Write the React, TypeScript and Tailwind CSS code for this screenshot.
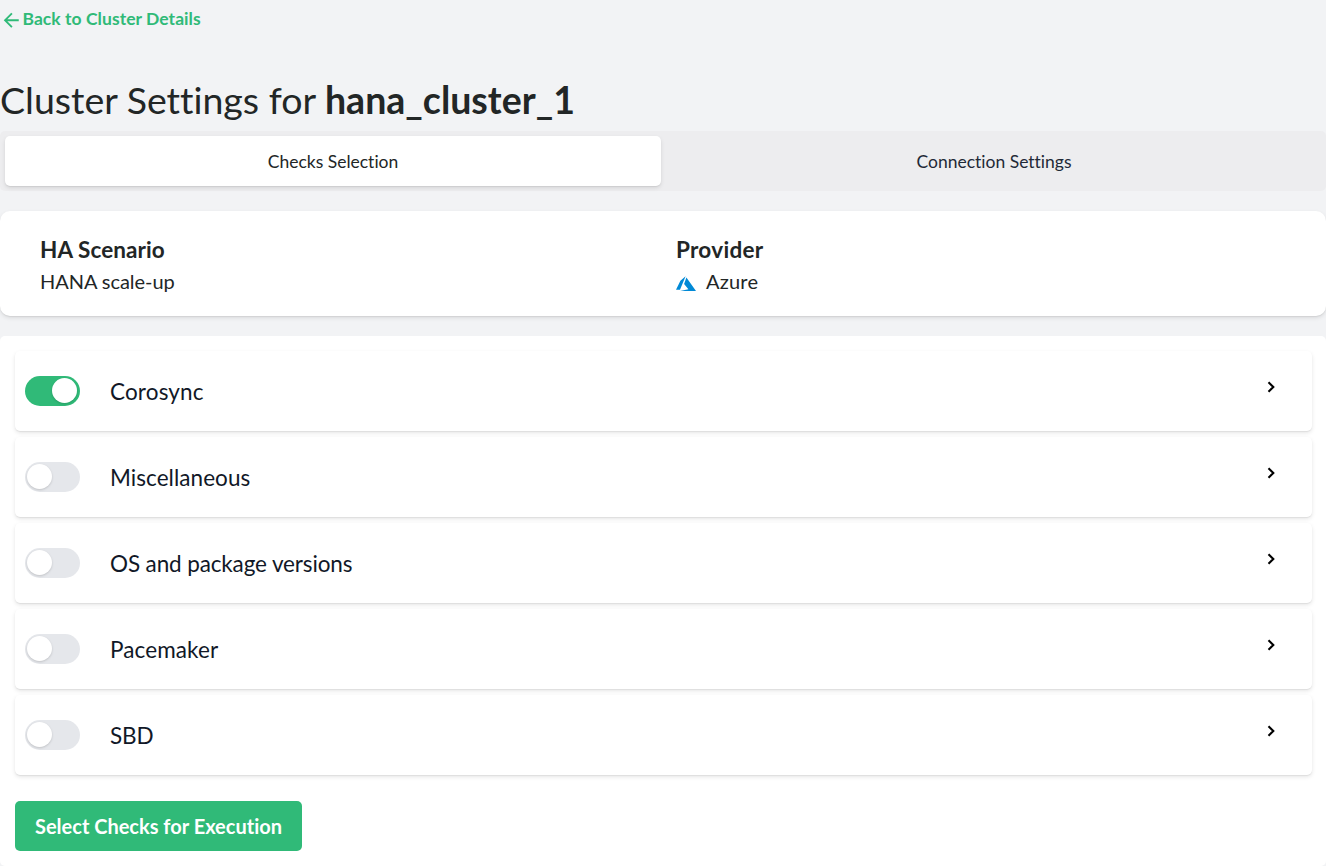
const groups = [
  { name: 'Corosync', on: true, spacing: 'tracking-[0.15px]' },
  { name: 'Miscellaneous', on: false, spacing: 'tracking-[0.06px]' },
  { name: 'OS and package versions', on: false, spacing: 'tracking-[-0.13px]' },
  { name: 'Pacemaker', on: false, spacing: 'tracking-[0.1px]' },
  { name: 'SBD', on: false, spacing: 'tracking-[-0.1px]' },
];

const softShadow = 'shadow-[0_1px_3px_0_rgba(0,0,0,0.1),0_1px_2px_0_rgba(0,0,0,0.06)]';
const cardShadow = 'shadow-[0_2px_4px_0_rgba(0,0,0,0.1),0_1px_1px_0_rgba(0,0,0,0.06)]';

function Toggle({ on }: { on: boolean }) {
  return (
    <button
      role="switch"
      aria-checked={on}
      className={`flex h-[30px] w-[55px] shrink-0 items-start rounded-full px-[2px] pt-[2px] ${on ? 'bg-[#30ba78]' : 'bg-[#e5e7eb]'}`}
    >
      <span className={`size-[25px] rounded-full bg-white ${softShadow} ${on ? 'ml-[25px]' : 'ml-0'}`} />
    </button>
  );
}

function ArrowBack() {
  return (
    <svg viewBox="0 0 24 24" className="mt-[2px] size-[22.5px] shrink-0 fill-current">
      <path d="M20 11H7.83l5.59-5.59L12 4l-8 8 8 8 1.41-1.41L7.83 13H20v-2z" />
    </svg>
  );
}

function AzureLogo() {
  return (
    <svg viewBox="0 0 20 16" className="h-[16px] w-[20px] shrink-0">
      <path fill="#0089d6" d="M9.6.2 4.4 4.8 0 13.8h4zM10.4 1.4 8.1 8l4.3 5.3-8.3 1.8H20z" />
    </svg>
  );
}

function Chevron() {
  return (
    <svg viewBox="0 0 24 24" className="size-[20px] shrink-0 fill-none stroke-black stroke-[2.5]">
      <path d="M9 6.2 14.8 12 9 17.8" />
    </svg>
  );
}

export default function App() {
  return (
    <div className="h-[866px] overflow-hidden bg-[#f2f3f5] font-['Lato',sans-serif] text-[20px] leading-[30px] text-[#222626] [font-variant-ligatures:none]">
      <a className="flex h-[38px] items-center text-[17.5px] font-bold leading-[25px] tracking-[0.05px] text-[#30ba78]">
        <ArrowBack />
        <span className="pb-[1px]">Back to Cluster Details</span>
      </a>
      <h1 className="mt-[37px] h-[56px] text-[37.5px] leading-[50px]">
        Cluster Settings for <span className="font-bold">hana_cluster_1</span>
      </h1>
      <div className="flex h-[60px] rounded-[5px] bg-[#ededef] p-[5px] text-[17.5px] leading-[25px]">
        <button className={`w-[656px] rounded-[5px] bg-white ${cardShadow}`}>Checks Selection</button>
        <button className="ml-[5px] flex-1 pl-[1px] text-[#1f2937]">Connection Settings</button>
      </div>
      <section className={`mt-[20px] grid h-[105px] grid-cols-2 rounded-[10px] bg-white px-[40px] pt-[21px] ${cardShadow}`}>
        <div>
          <div className="h-[34px] text-[22.5px] font-bold leading-[35px] tracking-[0.1px]">HA Scenario</div>
          <div className="tracking-[-0.05px]">HANA scale-up</div>
        </div>
        <div className="pl-[13px]">
          <div className="h-[34px] text-[22.5px] font-bold leading-[35px] tracking-[0.28px]">Provider</div>
          <div className="flex items-center gap-[10px] tracking-[0.2px]">
            <span className="flex pt-[5px]"><AzureLogo /></span>
            Azure
          </div>
        </div>
      </section>
      <main className="mt-[20px] h-[530px] rounded-[5px] bg-white pl-[15px] pr-[14px] pt-[15px]">
        <ul className="flex flex-col gap-[6px]">
          {groups.map((g) => (
            <li key={g.name} className={`flex h-[80px] items-center rounded-[5px] bg-white pl-[10px] pr-[31px] ${cardShadow}`}>
              <Toggle on={g.on} />
              <span className={`ml-[30px] flex-1 pt-[1px] text-[22.5px] leading-[35px] text-[#111827] ${g.spacing}`}>{g.name}</span>
              <span className="pb-[8px]"><Chevron /></span>
            </li>
          ))}
        </ul>
        <button className="mt-[26px] h-[50px] w-[287px] rounded-[5px] bg-[#30ba78] text-[20px] font-bold text-white">
          Select Checks for Execution
        </button>
      </main>
    </div>
  );
}
